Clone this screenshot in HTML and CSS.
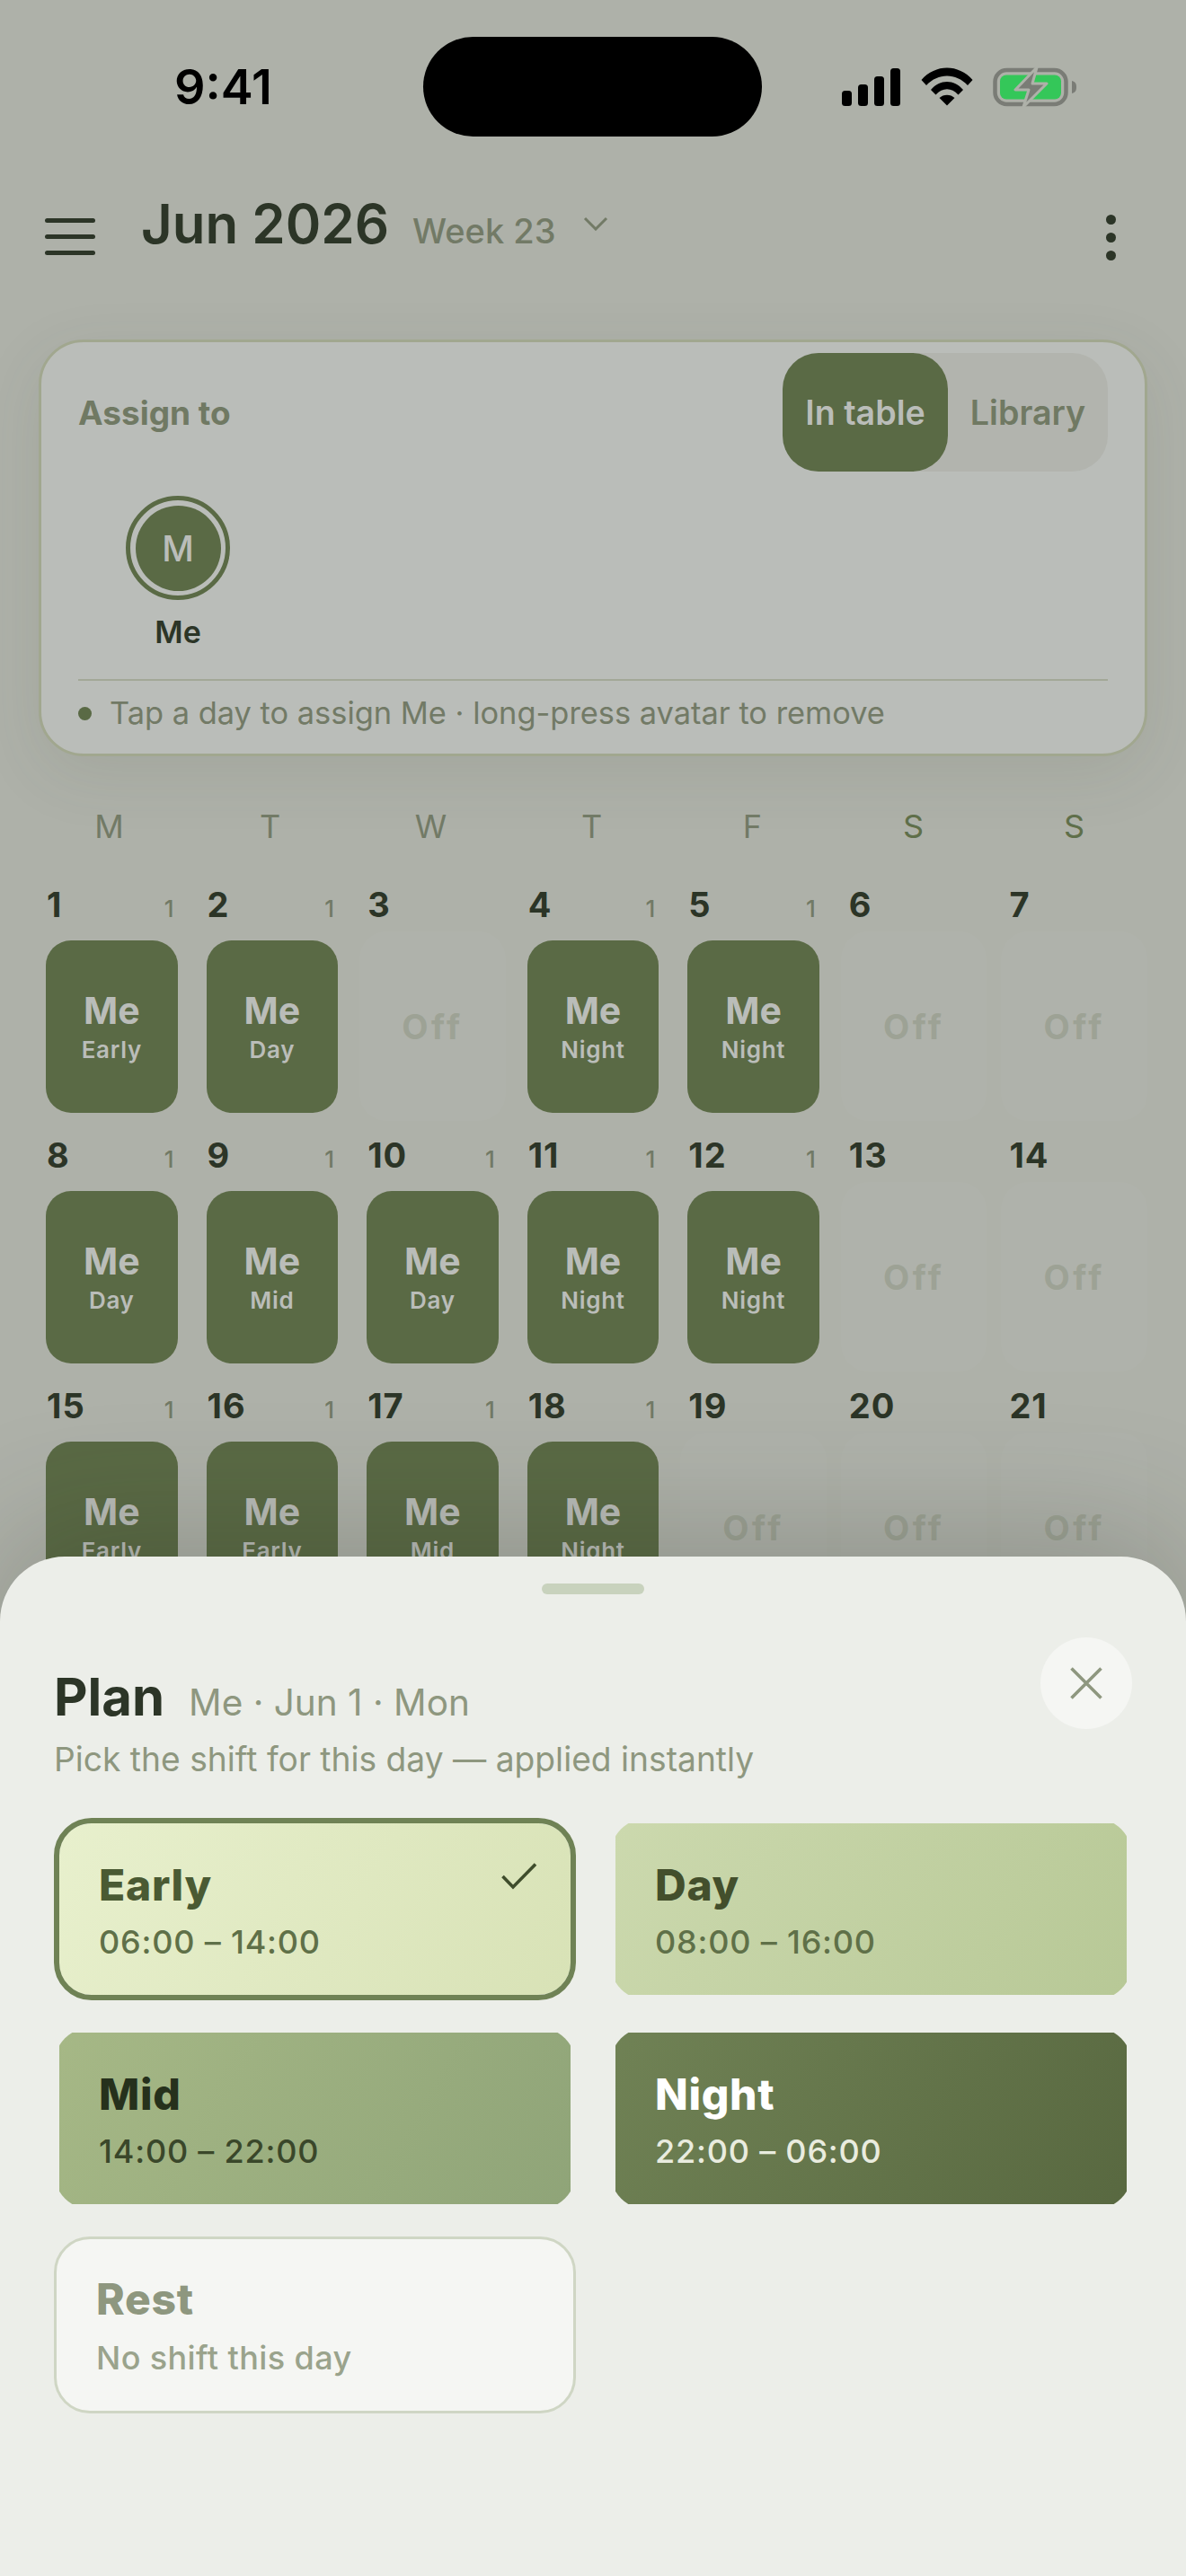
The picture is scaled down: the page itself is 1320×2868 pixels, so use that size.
FILE: index.html
```html
<!DOCTYPE html>
<html lang="en">
<head>
    <meta charset="UTF-8">
    <meta name="viewport" content="width=device-width, initial-scale=1.0">
    <title>Plan</title>
    <link rel="stylesheet" href="styles.css">
</head>
<body>
<div class="phone">
    <div class="status">
        <span class="time">9:41</span>
        <div class="island"></div>
        <div class="status-icons">
            <svg class="signal" width="66" height="42" viewBox="0 0 66 42">
                <rect x="0" y="25" width="11" height="17" rx="3.5"/>
                <rect x="18" y="18" width="11" height="24" rx="3.5"/>
                <rect x="36" y="9" width="11" height="33" rx="3.5"/>
                <rect x="54" y="0" width="11" height="42" rx="3.5"/>
            </svg>
            <svg class="wifi" width="58" height="43" viewBox="0 0 58 43">
                <path d="M0.5 14 C16 -4 42 -4 57.5 14 L52 20 C39 6 19 6 6 20 Z"/>
                <path d="M11 25 C21 13 37 13 47 25 L41.5 30.5 C34 22 24 22 16.5 30.5 Z"/>
                <path d="M20.5 34 C25 29.5 33 29.5 37.5 34 L29 42.5 Z"/>
            </svg>
            <svg class="battery" width="94" height="46" viewBox="0 0 94 46">
                <rect x="2.5" y="4" width="79" height="38" rx="13" fill="none" stroke="#7a7c76" stroke-width="4.5"/>
                <rect x="8" y="9.5" width="68" height="27" rx="7" fill="#34c759"/>
                <path d="M88 16 C92 17 93 19.5 93 23 C93 26.5 92 29 88 30 Z" fill="#7a7c76"/>
                <path d="M49 1 L25 26 L40 26 L34 45 L60 19 L44 19 Z" fill="#7a7c76" stroke="#aeb1a9" stroke-width="3" stroke-linejoin="round"/>
            </svg>
        </div>
    </div>

    <div class="topbar">
        <div class="burger"><i></i><i></i><i></i></div>
        <h1 class="month">Jun 2026</h1>
        <span class="week">Week 23</span>
        <svg class="chevron" width="28" height="16" viewBox="0 0 28 16"><path d="M2 2 L14 14 L26 2" fill="none" stroke="#727a66" stroke-width="3"/></svg>
        <div class="more"><i></i><i></i><i></i></div>
    </div>

    <div class="assign">
        <div class="assign-head">
            <span class="assign-label">Assign to</span>
            <div class="toggle">
                <span class="toggle-item active">In table</span>
                <span class="toggle-item">Library</span>
            </div>
        </div>
        <div class="person">
            <div class="avatar"><span>M</span></div>
            <span class="person-name">Me</span>
        </div>
        <div class="hint">
            <i class="hint-dot"></i>
            <span>Tap a day to assign Me · long-press avatar to remove</span>
        </div>
    </div>

    <div class="weekdays">
        <span>M</span><span>T</span><span>W</span><span>T</span><span>F</span><span class="wkend">S</span><span class="wkend">S</span>
    </div>

    <div class="calendar">
        <div class="day"><div class="day-head"><b>1</b><em>1</em></div><div class="tile on"><strong>Me</strong><small>Early</small></div></div>
        <div class="day"><div class="day-head"><b>2</b><em>1</em></div><div class="tile on"><strong>Me</strong><small>Day</small></div></div>
        <div class="day"><div class="day-head"><b>3</b></div><div class="tile off">Off</div></div>
        <div class="day"><div class="day-head"><b>4</b><em>1</em></div><div class="tile on"><strong>Me</strong><small>Night</small></div></div>
        <div class="day"><div class="day-head"><b>5</b><em>1</em></div><div class="tile on"><strong>Me</strong><small>Night</small></div></div>
        <div class="day"><div class="day-head"><b>6</b></div><div class="tile off">Off</div></div>
        <div class="day"><div class="day-head"><b>7</b></div><div class="tile off">Off</div></div>

        <div class="day"><div class="day-head"><b>8</b><em>1</em></div><div class="tile on"><strong>Me</strong><small>Day</small></div></div>
        <div class="day"><div class="day-head"><b>9</b><em>1</em></div><div class="tile on"><strong>Me</strong><small>Mid</small></div></div>
        <div class="day"><div class="day-head"><b>10</b><em>1</em></div><div class="tile on"><strong>Me</strong><small>Day</small></div></div>
        <div class="day"><div class="day-head"><b>11</b><em>1</em></div><div class="tile on"><strong>Me</strong><small>Night</small></div></div>
        <div class="day"><div class="day-head"><b>12</b><em>1</em></div><div class="tile on"><strong>Me</strong><small>Night</small></div></div>
        <div class="day"><div class="day-head"><b>13</b></div><div class="tile off">Off</div></div>
        <div class="day"><div class="day-head"><b>14</b></div><div class="tile off">Off</div></div>

        <div class="day"><div class="day-head"><b>15</b><em>1</em></div><div class="tile on"><strong>Me</strong><small>Early</small></div></div>
        <div class="day"><div class="day-head"><b>16</b><em>1</em></div><div class="tile on"><strong>Me</strong><small>Early</small></div></div>
        <div class="day"><div class="day-head"><b>17</b><em>1</em></div><div class="tile on"><strong>Me</strong><small>Mid</small></div></div>
        <div class="day"><div class="day-head"><b>18</b><em>1</em></div><div class="tile on"><strong>Me</strong><small>Night</small></div></div>
        <div class="day"><div class="day-head"><b>19</b></div><div class="tile off">Off</div></div>
        <div class="day"><div class="day-head"><b>20</b></div><div class="tile off">Off</div></div>
        <div class="day"><div class="day-head"><b>21</b></div><div class="tile off">Off</div></div>
    </div>

    <!-- bottom sheet -->
    <div class="sheet">
        <div class="handle"></div>
        <div class="sheet-head">
            <div class="sheet-titles">
                <div class="sheet-title"><h2>Plan</h2><span>Me · Jun 1 · Mon</span></div>
                <p>Pick the shift for this day — applied instantly</p>
            </div>
            <div class="close">
                <svg width="36" height="36" viewBox="0 0 36 36"><path d="M1.5 1.5 L34.5 34.5 M34.5 1.5 L1.5 34.5" stroke="#8e977f" stroke-width="3.6" fill="none"/></svg>
            </div>
        </div>
        <div class="shifts">
            <div class="shift early selected">
                <div class="shift-name">Early</div>
                <div class="shift-time">06:00 – 14:00</div>
                <svg class="check" width="40" height="30" viewBox="0 0 40 30"><path d="M1.5 15 L13 27 L38 1.5" fill="none" stroke="#3f4d2c" stroke-width="3.6"/></svg>
            </div>
            <div class="shift dayshift">
                <div class="shift-name">Day</div>
                <div class="shift-time">08:00 – 16:00</div>
            </div>
            <div class="shift mid">
                <div class="shift-name">Mid</div>
                <div class="shift-time">14:00 – 22:00</div>
            </div>
            <div class="shift night">
                <div class="shift-name">Night</div>
                <div class="shift-time">22:00 – 06:00</div>
            </div>
            <div class="shift rest">
                <div class="shift-name">Rest</div>
                <div class="shift-time">No shift this day</div>
            </div>
        </div>
    </div>
</div>
</body>
</html>
```

FILE: styles.css
```css
* {
    box-sizing: border-box;
}

body {
    margin: 0;
    font-family: "Inter", "Noto Sans", sans-serif;
    color: #2c3527;
}

.phone {
    position: relative;
    width: 1320px;
    height: 2868px;
    padding-top: 41px;
    overflow: hidden;
    background: #aeb1a9;
}

/* Status bar */
.status {
    display: flex;
    align-items: center;
    height: 111px;
}

.time {
    width: 471px;
    padding-left: 194px;
    font-size: 54px;
    font-weight: 600;
    line-height: 1;
    color: #000;
    white-space: nowrap;
}

.island {
    width: 377px;
    height: 111px;
    border-radius: 56px;
    background: #000;
}

.status-icons {
    display: flex;
    align-items: center;
    margin-left: 89px;
    gap: 22px;
}

.signal,
.wifi {
    fill: #000;
}

/* Top bar */
.topbar {
    display: flex;
    align-items: baseline;
    height: 226px;
    padding: 60px 0 0 50px;
}

.month {
    margin: 0 0 0 51px;
    font-size: 60px;
    font-weight: 600;
    line-height: 74px;
    color: #2c3527;
}

.week {
    margin-left: 26px;
    font-size: 38px;
    font-weight: 500;
    color: #727a66;
}

.chevron {
    align-self: flex-start;
    margin: 29px 0 0 30px;
}

.burger {
    align-self: flex-start;
    display: flex;
    flex-direction: column;
    gap: 13px;
    width: 56px;
    margin-top: 31px;
}

.burger i {
    height: 5px;
    border-radius: 3px;
    background: #2c3527;
}

.more {
    align-self: flex-start;
    display: flex;
    flex-direction: column;
    gap: 9px;
    margin: 27px 0 0 auto;
    padding-right: 78px;
}

.more i {
    width: 11px;
    height: 11px;
    border-radius: 50%;
    background: #2c3527;
}

/* Assign card */
.assign {
    height: 464px;
    margin: 0 43px;
    padding: 12px 41px 0;
    border: 3px solid #a1a78f;
    border-radius: 50px;
    background: #babdb9;
    box-shadow: 0 20px 70px rgba(70, 75, 60, 0.1);
}

.assign-head {
    display: flex;
    justify-content: space-between;
    align-items: center;
}

.assign-label {
    font-size: 37px;
    font-weight: 700;
    color: #707963;
}

.toggle {
    display: flex;
    width: 362px;
    height: 132px;
    border-radius: 40px;
    background: #b2b4ae;
}

.toggle-item {
    flex: 1;
    display: flex;
    justify-content: center;
    align-items: center;
    font-size: 37.6px;
    font-weight: 600;
    color: #707963;
}

.toggle-item.active {
    flex: none;
    width: 184px;
    border-radius: 40px;
    background: #5a6a45;
    color: #babdb9;
}

.person {
    display: flex;
    flex-direction: column;
    align-items: center;
    width: 116px;
    margin: 27px 0 0 53px;
}

.avatar {
    display: flex;
    justify-content: center;
    align-items: center;
    width: 116px;
    height: 116px;
    border: 5px solid #5a6a45;
    border-radius: 50%;
}

.avatar span {
    display: flex;
    justify-content: center;
    align-items: center;
    width: 95px;
    height: 95px;
    border-radius: 50%;
    background: #5a6a45;
    color: #babdb9;
    font-size: 39px;
    font-weight: 500;
}

.person-name {
    margin-top: 14px;
    font-size: 34px;
    font-weight: 600;
    line-height: 44px;
}

.hint {
    display: flex;
    align-items: center;
    gap: 20px;
    margin-top: 30px;
    padding-top: 14px;
    border-top: 2px solid #a3a897;
    font-size: 34.4px;
    line-height: 44px;
    color: #727a66;
}

.hint-dot {
    width: 15px;
    height: 15px;
    border-radius: 50%;
    background: #5a6a45;
}

/* Calendar */
.weekdays {
    display: grid;
    grid-template-columns: repeat(7, 1fr);
    column-gap: 16px;
    margin-top: 56px;
    padding: 0 43px 0 40px;
    font-size: 36px;
    line-height: 44px;
    text-align: center;
    color: #727a66;
}

.wkend {
    color: #5f6f4a;
}

.calendar {
    display: grid;
    grid-template-columns: repeat(7, 1fr);
    gap: 15px 16px;
    margin-top: 42px;
    padding: 0 43px;
}

.day-head {
    display: flex;
    justify-content: space-between;
    align-items: baseline;
    height: 46px;
    padding: 0 12px 0 9px;
}

.day-head b {
    font-size: 38px;
    font-weight: 700;
    line-height: 46px;
    letter-spacing: 1px;
}

.day-head em {
    font-size: 26px;
    font-style: normal;
    font-weight: 500;
    color: #727a66;
}

.tile {
    display: flex;
    flex-direction: column;
    justify-content: center;
    align-items: center;
}

.tile.on {
    height: 192px;
    margin: 17px 8px 9px;
    border-radius: 28px;
    background: #5a6a45;
    color: #babdb9;
}

.tile.on strong {
    font-size: 41px;
    font-weight: 700;
    line-height: 48px;
}

.tile.on small {
    margin-top: 4px;
    font-size: 26px;
    font-weight: 600;
    line-height: 32px;
    letter-spacing: 0.7px;
}

.tile.off {
    height: 211px;
    margin-top: 7px;
    border-radius: 30px;
    background: rgba(255, 255, 255, 0.025);
    font-size: 38px;
    font-weight: 700;
    letter-spacing: 3.5px;
    color: #9da295;
}

/* Bottom sheet */
.sheet {
    position: absolute;
    left: 0;
    right: 0;
    bottom: 0;
    height: 1135px;
    padding: 30px 60px 0;
    border-radius: 72px 72px 0 0;
    background: #eceee9;
    box-shadow: 0 -30px 140px rgba(40, 45, 30, 0.22);
}

.handle {
    width: 114px;
    height: 12px;
    margin: 0 auto;
    border-radius: 6px;
    background: #c8d2bd;
}

.sheet-head {
    display: flex;
    justify-content: space-between;
    align-items: flex-start;
    margin-top: 48px;
}

.sheet-titles {
    padding-top: 30px;
}

.sheet-title {
    display: flex;
    align-items: baseline;
    gap: 27px;
}

.sheet-title h2 {
    margin: 0;
    font-size: 58px;
    font-weight: 700;
    line-height: 72px;
    color: #2c3527;
}

.sheet-title span {
    font-size: 40.5px;
    color: #8e977f;
}

.sheet-titles p {
    margin: 11px 0 0;
    font-size: 37.2px;
    line-height: 46px;
    color: #8e977f;
}

.close {
    display: flex;
    justify-content: center;
    align-items: center;
    width: 102px;
    height: 102px;
    border-radius: 50%;
    background: #f5f6f3;
}

.shifts {
    display: grid;
    grid-template-columns: 1fr 1fr;
    gap: 30px 38px;
    margin-top: 42px;
}

/* unselected cards keep the 6px ring space, the rounded box is cut off by it */
.shift {
    position: relative;
    height: 203px;
    padding: 41px 44px 0;
    border: 6px solid transparent;
    border-radius: 42px;
    background-origin: border-box;
    clip-path: inset(6px);
}

.shift-name {
    font-size: 48px;
    font-weight: 800;
    line-height: 56px;
    letter-spacing: 0.7px;
}

.shift-time {
    margin-top: 13px;
    font-size: 36px;
    font-weight: 500;
    line-height: 44px;
    letter-spacing: 0.8px;
}

.early {
    background-image: linear-gradient(120deg, #e8f0cd, #d8e2b6);
    color: #4a5a33;
}

.early .shift-time,
.dayshift .shift-time {
    color: #5f7048;
}

.selected {
    border-color: #6f8255;
    background-clip: padding-box;
    background-origin: padding-box;
    clip-path: none;
}

.check {
    position: absolute;
    top: 44px;
    right: 37px;
}

.dayshift {
    background-image: linear-gradient(120deg, #ccd9ae, #b7c896);
    color: #434f2c;
}

.mid {
    background-image: linear-gradient(120deg, #a6b886, #8fa478);
    color: #26311c;
}

.mid .shift-time {
    color: #3a472a;
}

.night {
    background-image: linear-gradient(120deg, #708255, #586840);
    color: #fff;
}

.night .shift-time {
    color: #e9ecdf;
}

.rest {
    height: 197px;
    padding-top: 39px;
    border: 3px solid #cfd6c4;
    border-radius: 40px;
    background: #f5f6f3;
    color: #8e977f;
    clip-path: none;
}

.rest .shift-time {
    margin-top: 15px;
    letter-spacing: 0.4px;
    color: #9aa38c;
}
```
